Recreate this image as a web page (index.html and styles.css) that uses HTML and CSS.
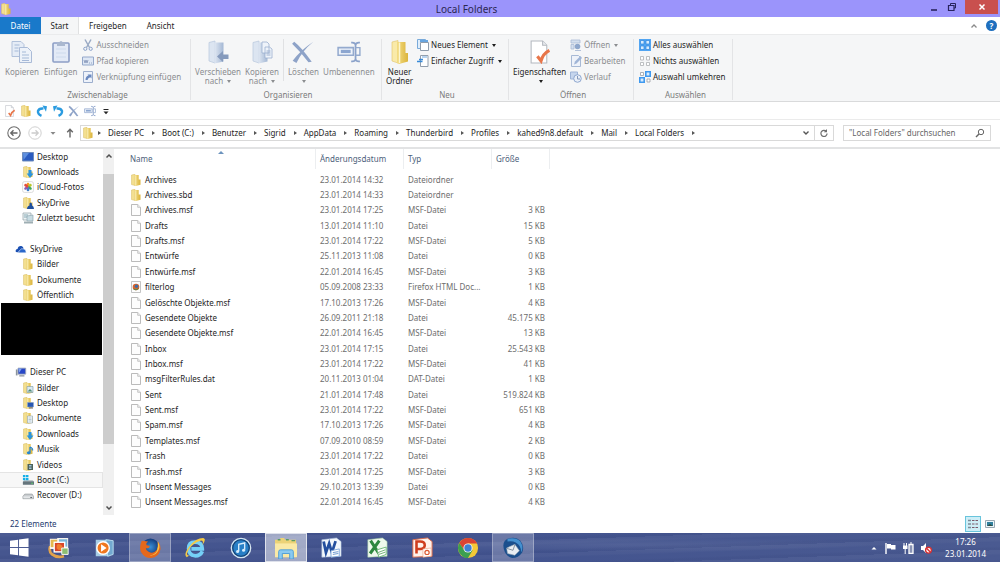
FILE: index.html
```html
<!DOCTYPE html>
<html lang="de">
<head>
<meta charset="utf-8">
<title>Local Folders</title>
<link rel="stylesheet" href="styles.css">
</head>
<body>
<svg class="sprite" aria-hidden="true">
  <defs>
    <linearGradient id="gy" x1="0" x2="1"><stop offset="0" stop-color="#f3dc83"/><stop offset="1" stop-color="#dbb43c"/></linearGradient>
    <linearGradient id="gb" x1="0" x2="1"><stop offset="0" stop-color="#dfe7f2"/><stop offset="1" stop-color="#a3b7d4"/></linearGradient>
    <radialGradient id="gff"><stop offset="0" stop-color="#3b8fd6"/><stop offset="1" stop-color="#123a7c"/></radialGradient>
  </defs>
  <symbol id="folder" viewBox="0 0 12 12"><path d="M1.500 1L5 .3v11.200l-3.500-.9z" fill="#f3df90" stroke="#d9bd62" stroke-width=".5"/><path d="M4.700 1h4v4.500h1.800v5.200L5.800 12l-1.100-.4z" fill="url(#gy)"/><path d="M5.800 1.500v10" stroke="#fbf2c4" stroke-width=".8"/></symbol>
  <symbol id="bigfolder" viewBox="0 0 22 24"><path d="M3 2L9 .5v22.500l-6-2z" fill="#f9eaa9" stroke="#dfc36a" stroke-width=".6"/><path d="M8 2h8.500v11H19v8.500L10 24l-2-1z" fill="url(#gy)"/><path d="M10.500 2.500V23" stroke="#fdf6cf" stroke-width="1.500"/></symbol>
  <symbol id="file" viewBox="0 0 10 12"><path d="M.5.5h6.200l2.800 2.800v8.200h-9z" fill="#fdfdfd" stroke="#a9a9a9" stroke-width=".8"/><path d="M6.700.5v2.800h2.800" fill="#eee" stroke="#b5b5b5" stroke-width=".7"/></symbol>
  <symbol id="html" viewBox="0 0 10 12"><path d="M.5.5h9v11h-9z" fill="#fdfdfd" stroke="#b5b5b5" stroke-width=".8"/><circle cx="5" cy="6" r="3.300" fill="#d8632b"/><circle cx="5.500" cy="5.300" r="1.700" fill="#3c6da8"/><path d="M2.500 8q2.500 2 5-.5" stroke="#4d8a4b" fill="none"/></symbol>
  <symbol id="check" viewBox="0 0 20 23"><path d="M1.500 1h11l4 4v17h-15z" fill="#fff" stroke="#b3b8bf"/><path d="M12.500 1v4h4" fill="#e8ebef" stroke="#b3b8bf"/><path d="M7.500 15.500l3.500 4.500q2-7 8-10" fill="none" stroke="#e8764a" stroke-width="3"/></symbol>
  <symbol id="x" viewBox="0 0 22 22"><path d="M3 1.500Q10 7 19 20L16 20.500Q9 11 1 3.500zM20.500 1.500Q10 10 5 21L1.500 19Q9 9 20.500 1.500z" fill="#8ea3c8"/></symbol>
  <symbol id="rename" viewBox="0 0 22 20"><path d="M1 6h14v7H1z" fill="#eef3fa" stroke="#94aace" stroke-width="1.400"/><path d="M3.500 8h9v3h-9z" fill="#8ca6d0"/><path d="M13 1.500q3.500-.5 4 2 .5-2.500 4-2M13 18.500q3.500.5 4-2 .5 2.500 4 2M17 3v14" fill="none" stroke="#8ba2ca" stroke-width="1.600"/><path d="M17 6h4v7h-4" fill="none" stroke="#94aace" stroke-width="1.300"/></symbol>
  <symbol id="redo" viewBox="0 0 12 12"><path d="M5.500 10.800Q1.500 9 2 6 3 3 7.500 3.500" fill="none" stroke="#2a9be0" stroke-width="2.400"/><path d="M6.500.5l4.500.8-1 5.500z" fill="#2a9be0"/></symbol>
  <symbol id="dl" viewBox="0 0 12 12"><use href="#folder"/><path d="M6.500 4h3v3.500h2L8 12 4.700 7.500h1.800z" fill="#2a94dd"/></symbol>
  <symbol id="fdesk" viewBox="0 0 12 12"><use href="#folder"/><path d="M5.500 5.500h6v4.500h-6z" fill="#2757b3" stroke="#89a4cf" stroke-width=".5"/><path d="M7 11h4" stroke="#667"/></symbol>
  <symbol id="fsky" viewBox="0 0 12 12"><use href="#folder"/><path d="M5 12q0-3 2.500-3.500Q7 6 8.500 5.500q2 .5 1.500 3 2 .5 2 3.500z" fill="#20519f"/></symbol>
  <symbol id="fpic" viewBox="0 0 12 12"><use href="#folder"/><path d="M5 4.500h6v6H5z" fill="#d9e9f2" stroke="#7d98a3" stroke-width=".6"/><path d="M5.500 9.500L8 7l2.500 2.500z" fill="#528d78"/></symbol>
  <symbol id="fdoc" viewBox="0 0 12 12"><use href="#folder"/><path d="M5.500 4h5v7h-5z" fill="#f4f8fb" stroke="#8aa0ad" stroke-width=".6"/><path d="M6.500 6h3M6.500 7.500h3M6.500 9h3" stroke="#86a7bd" stroke-width=".6"/></symbol>
  <symbol id="fmus" viewBox="0 0 12 12"><use href="#folder"/><path d="M8 4v5.500M8 4q3 1 2.500 3.500" fill="none" stroke="#2785cf" stroke-width="1.300"/><ellipse cx="6.800" cy="9.800" rx="1.900" ry="1.500" fill="#2785cf"/></symbol>
  <symbol id="fvid" viewBox="0 0 12 12"><use href="#folder"/><path d="M5.500 5h5.500v6H5.500z" fill="#4d6259"/><path d="M7 6h2.500v1.500H7zM7 8.500h2.500V10H7z" fill="#9bc0d8"/></symbol>
  <symbol id="desk" viewBox="0 0 12 12"><path d="M.5 1.500h11v8.500H.5z" fill="#2c5cc0" stroke="#6f8dbd"/><path d="M1 2h6L1.500 9z" fill="#5f90df"/></symbol>
  <symbol id="photos" viewBox="0 0 12 12"><rect x=".5" y=".5" width="11" height="11" rx="2" fill="#fbfbfb" stroke="#ccc" stroke-width=".6"/><g stroke-width="2.600" stroke-linecap="round"><path d="M6 4.800V3" stroke="#f59a23"/><path d="M7 5.200l1.500-1" stroke="#b9c92e"/><path d="M7 6.500l1.500 1" stroke="#42a95c"/><path d="M6 7.200V9" stroke="#3d7fc9"/><path d="M5 6.500l-1.500 1" stroke="#8c5bb4"/><path d="M5 5.200l-1.500-1" stroke="#e34b3d"/></g></symbol>
  <symbol id="recent" viewBox="0 0 12 12"><path d="M1 1h8v7H1z" fill="#edf3f5" stroke="#90a2a8" stroke-width=".7"/><path d="M2 3h4M2 5h3" stroke="#6d98a5" stroke-width=".8"/><path d="M5 4l6-1v6H5z" fill="#c8dce3" stroke="#88a0a9" stroke-width=".6"/><path d="M2 9.500h9v2H2z" fill="#9eaeb3"/></symbol>
  <symbol id="cloud" viewBox="0 0 14 12"><path d="M1 9.500Q0 6.500 3 6q.5-4 4.500-3.500Q10 3 10 6L5 10z" fill="#1a4fb2"/><path d="M4.500 10.500Q3.500 8 6 7.500 7 4.500 10 6q3 0 3 4.500z" fill="#2a67ca" stroke="#fff" stroke-width=".6"/></symbol>
  <symbol id="pc" viewBox="0 0 14 12"><path d="M1 3h2v7H1z" fill="#8b949d"/><path d="M3.500 1.500h9v7h-9z" fill="#2747c8" stroke="#9fa7b5"/><path d="M4 2h4L5 7z" fill="#7fa3ee"/><path d="M5 10.500h6" stroke="#8c939d" stroke-width="1.500"/></symbol>
  <symbol id="boot" viewBox="0 0 13 12"><path d="M1 7.500l1.500-1h9l1.500 1v3.500H1z" fill="#8d999f"/><path d="M1 8h12v3H1z" fill="#65757c"/><path d="M1 .5h2.700v2.600H1zM4.300.5H7v2.600H4.300zM1 3.700h2.700v2.600H1zM4.300 3.700H7v2.600H4.300z" fill="#15b0e8"/><path d="M10 9.500h2" stroke="#5cda6d"/></symbol>
  <symbol id="drive" viewBox="0 0 13 12"><path d="M1 7.500L3 5h8l1.500 2.500V10H1z" fill="#c9cdd0" stroke="#8f9599" stroke-width=".7"/><path d="M1.500 7.500h10.500v2H1.500z" fill="#e4e6e8"/><path d="M9 8.700h2" stroke="#596067"/></symbol>
  <symbol id="copy" viewBox="0 0 22 24"><path d="M1 1.500h9l3 3v12H1z" fill="#e5ecf6" stroke="#b1c1da"/><path d="M8.500 7.500h8l4 4v11h-12z" fill="#edf2f9" stroke="#aabbd7"/><path d="M3.500 5h5M3.500 8h4M3.500 11h4M11 12h4M11 15h7M11 18h7M11 20.500h7" stroke="#a6b9d8" stroke-width="1.200"/></symbol>
  <symbol id="paste" viewBox="0 0 20 24"><rect x="2" y="3" width="16" height="19" rx="1" fill="#e3eaf6" stroke="#8d9fc6" stroke-width="1.600"/><path d="M6 2.500h2q2-3 4 0h2V6H6z" fill="#aab8cf"/><path d="M5 9h10M5 13h10M5 17h10" stroke="#d5dff0" stroke-width="1.500"/></symbol>
  <symbol id="bfolder" viewBox="0 0 22 24"><path d="M2 2.500L8 1v22l-6-2z" fill="#dce5f1" stroke="#b8c7dc" stroke-width=".7"/><path d="M7.500 2.500h9v19l-9 2z" fill="url(#gb)"/></symbol>
  <symbol id="move" viewBox="0 0 22 24"><use href="#bfolder"/><path d="M10 16.500l6-5.500v3.500h5.500v4.500H16v3z" fill="#859abc"/></symbol>
  <symbol id="copyto" viewBox="0 0 22 24"><use href="#bfolder"/><path d="M11 2h5l2 2v9h-7zM14 7h4.500l2.500 2v9h-7z" fill="#eef3fa" stroke="#9db0cf" stroke-width=".8"/><path d="M15.500 11h4M15.500 13h4M15.500 15h4" stroke="#9db0cf"/></symbol>
  <symbol id="cut" viewBox="0 0 12 12"><path d="M3 .5l4.500 8M9 .5l-4.500 8" stroke="#9aaac4" stroke-width="1.500"/><circle cx="3.300" cy="9.800" r="1.600" fill="none" stroke="#8ba2c9"/><circle cx="8.700" cy="9.800" r="1.600" fill="none" stroke="#8ba2c9"/></symbol>
  <symbol id="path" viewBox="0 0 12 12"><path d="M.5 2h11v8H.5z" fill="#dee7f4" stroke="#94a8ca"/><path d="M2 5l1 3 1-3 1 3 1-3M7 8h1M9 8h1" fill="none" stroke="#8092b5" stroke-width=".8"/></symbol>
  <symbol id="link" viewBox="0 0 12 12"><path d="M1.500.5h9v11h-9z" fill="#edf2fa" stroke="#9caecd"/><path d="M3.500 9q0-4 3-4.500L5.500 3.500h4v4l-1.200-1.200Q6 7 5.500 9z" fill="#6b8ac0"/></symbol>
  <symbol id="newitem" viewBox="0 0 12 12"><path d="M.5.5h8v9h-8z" fill="#e0eefb" stroke="#79aada"/><path d="M3.500 3.500h8v8h-8z" fill="#fff" stroke="#8f9cab"/><path d="M3 1h8v2H3z" fill="#68a5df"/></symbol>
  <symbol id="easy" viewBox="0 0 12 12"><path d="M3.500.5H11v11H3.500z" fill="#fff" stroke="#929eac"/><path d="M0 6.500h5.500M2 4.500h4" stroke="#398ad8" stroke-width="1.300"/><path d="M5 2h5" stroke="#70a8df"/></symbol>
  <symbol id="open" viewBox="0 0 12 12"><path d="M1 1h9v3H1zM1 5.500h3V10H1z" fill="#d5e0ef" stroke="#a9bbd6" stroke-width=".8"/><circle cx="7.500" cy="7.500" r="2.800" fill="#8fa7cc"/><path d="M5 11.500h6" stroke="#b2c1d9"/></symbol>
  <symbol id="edit" viewBox="0 0 12 12"><path d="M1.500.5h7l2 2v9h-9z" fill="#eef2f9" stroke="#a7b9d5"/><path d="M4 9.500l1-3L10.500 1 12 3 6.500 8.500z" fill="#9fb4d6"/></symbol>
  <symbol id="hist" viewBox="0 0 12 12"><path d="M.5 1h7v7h-7z" fill="#c5d5ed" stroke="#9eb4d7"/><circle cx="7.500" cy="7.500" r="3.800" fill="#e9eff8" stroke="#8ea7cf"/><path d="M7.500 5v3h2.500" fill="none" stroke="#8499bd"/></symbol>
  <symbol id="all" viewBox="0 0 12 12"><path d="M0 0h12v12H0z" fill="#52a5f2"/><path d="M1.500 1.500h3.500V5H1.500zM7 1.500h3.500V5H7zM1.500 7H5v3.500H1.500zM7 7h3.500v3.500H7z" fill="#d7ebfd" stroke="#2e86de" stroke-width=".7"/></symbol>
  <symbol id="none" viewBox="0 0 12 12"><path d="M1.500 1.500h3V5h-3zM7.500 1.500h3V5h-3zM1.500 7.500h3v3h-3zM7.500 7.500h3v3h-3z" fill="#fff" stroke="#adb0b4" stroke-width=".8"/></symbol>
  <symbol id="inv" viewBox="0 0 12 12"><path d="M1.500 1.500h3v3h-3zM8 8h3v3H8z" fill="#fff" stroke="#999fa6" stroke-width=".8"/><path d="M6.800.800h4.400v4.400H6.800zM.8 6.800h4.400v4.400H.8z" fill="#d9ecfe" stroke="#3f99ef" stroke-width="1.600"/></symbol>
</svg>

<div class="window">
  <header class="titlebar">
    <svg class="i12"><use href="#folder"/></svg>
    <h1>Local Folders</h1>
    <div class="wincontrols">
      <button aria-label="Minimieren"><svg viewBox="0 0 10 10" class="i10"><path d="M2 8h6" stroke="#28235e" stroke-width="1.600"/></svg></button>
      <button aria-label="Wiederherstellen"><svg viewBox="0 0 10 10" class="i10"><path d="M3.500 3V1.500h5V6H7" fill="none" stroke="#28235e"/><path d="M1.500 3.500H7v5H1.500z" fill="none" stroke="#28235e" stroke-width="1.200"/></svg></button>
      <button class="close" aria-label="Schließen"><svg viewBox="0 0 10 10" class="i10"><path d="M2.500 2.500l5 5M7.500 2.500l-5 5" stroke="#fff" stroke-width="1.500"/></svg></button>
    </div>
  </header>

  <nav class="tabs">
    <button class="tab file-tab">Datei</button>
    <button class="tab active">Start</button>
    <button class="tab">Freigeben</button>
    <button class="tab">Ansicht</button>
    <span class="tabs-right">
      <button aria-label="Menüband minimieren"><svg viewBox="0 0 8 8" class="i8"><path d="M1.500 5.500L4 3l2.500 2.500" fill="none" stroke="#8a8a8a" stroke-width="1.300"/></svg></button>
      <button class="help" aria-label="Hilfe">?</button>
    </span>
  </nav>

  <section class="ribbon">
    <div class="group g1 off">
      <div class="tools">
        <button class="big"><svg><use href="#copy"/></svg>Kopieren</button>
        <button class="big"><svg><use href="#paste"/></svg>Einfügen</button>
        <div class="stack">
          <button><svg class="i12"><use href="#cut"/></svg>Ausschneiden</button>
          <button><svg class="i12"><use href="#path"/></svg>Pfad kopieren</button>
          <button><svg class="i12"><use href="#link"/></svg>Verknüpfung einfügen</button>
        </div>
      </div>
      <h2>Zwischenablage</h2>
    </div>
    <div class="group g2 off">
      <div class="tools">
        <button class="big"><svg><use href="#move"/></svg>Verschieben<span>nach <i class="caret"></i></span></button>
        <button class="big"><svg><use href="#copyto"/></svg>Kopieren<span>nach <i class="caret"></i></span></button>
        <span class="divider"></span>
        <button class="big"><svg><use href="#x"/></svg>Löschen<span><i class="caret"></i></span></button>
        <button class="big"><svg><use href="#rename"/></svg>Umbenennen</button>
      </div>
      <h2>Organisieren</h2>
    </div>
    <div class="group g3">
      <div class="tools">
        <button class="big"><svg><use href="#bigfolder"/></svg>Neuer<span>Ordner</span></button>
        <div class="stack">
          <button><svg class="i12"><use href="#newitem"/></svg>Neues Element <i class="caret"></i></button>
          <button><svg class="i12"><use href="#easy"/></svg>Einfacher Zugriff <i class="caret"></i></button>
        </div>
      </div>
      <h2>Neu</h2>
    </div>
    <div class="group g4">
      <div class="tools">
        <button class="big"><svg><use href="#check"/></svg>Eigenschaften<span><i class="caret"></i></span></button>
        <div class="stack off">
          <button><svg class="i12"><use href="#open"/></svg>Öffnen <i class="caret"></i></button>
          <button><svg class="i12"><use href="#edit"/></svg>Bearbeiten</button>
          <button><svg class="i12"><use href="#hist"/></svg>Verlauf</button>
        </div>
      </div>
      <h2>Öffnen</h2>
    </div>
    <div class="group g5">
      <div class="tools">
        <div class="stack">
          <button><svg class="i12"><use href="#all"/></svg>Alles auswählen</button>
          <button><svg class="i12"><use href="#none"/></svg>Nichts auswählen</button>
          <button><svg class="i12"><use href="#inv"/></svg>Auswahl umkehren</button>
        </div>
      </div>
      <h2>Auswählen</h2>
    </div>
  </section>

  <div class="quick">
    <button aria-label="Eigenschaften"><svg class="i12"><use href="#check"/></svg></button>
    <button aria-label="Neuer Ordner"><svg class="i12"><use href="#folder"/></svg></button>
    <button aria-label="Rückgängig"><svg class="i12"><use href="#redo"/></svg></button>
    <button class="flip" aria-label="Wiederholen"><svg class="i12"><use href="#redo"/></svg></button>
    <button aria-label="Löschen"><svg class="i12"><use href="#x"/></svg></button>
    <button aria-label="Umbenennen"><svg class="i12"><use href="#rename"/></svg></button>
    <button aria-label="Anpassen"><svg class="i12" viewBox="0 0 12 12"><path d="M3.500 4.500h5" stroke="#222"/><path d="M3.500 6.500h5L6 9.200z" fill="#222"/></svg></button>
  </div>

  <div class="address">
    <button aria-label="Zurück"><svg class="i14" viewBox="0 0 14 14"><circle cx="7" cy="7" r="6.200" fill="none" stroke="#6f6f6f" stroke-width="1.100"/><path d="M10.500 7H4M6.500 4.300L3.800 7l2.700 2.700" fill="none" stroke="#666" stroke-width="1.400"/></svg></button>
    <button aria-label="Vorwärts"><svg class="i14" viewBox="0 0 14 14"><circle cx="7" cy="7" r="6.200" fill="none" stroke="#d0d0d0"/><path d="M3.500 7H10M7.500 4.300L10.200 7 7.500 9.700" fill="none" stroke="#ccc" stroke-width="1.300"/></svg></button>
    <button aria-label="Verlauf"><svg class="i8" viewBox="0 0 8 8"><path d="M1.500 3h5L4 5.700z" fill="#888"/></svg></button>
    <button aria-label="Nach oben"><svg class="i12" viewBox="0 0 12 12"><path d="M6 10.500V2.500M3.200 5.300L6 2.300l2.800 3" fill="none" stroke="#666" stroke-width="1.400"/></svg></button>
    <div class="crumbs">
      <svg class="i12"><use href="#folder"/></svg>
      <button>Dieser PC</button><button>Boot (C:)</button><button>Benutzer</button><button>Sigrid</button><button>AppData</button><button>Roaming</button><button>Thunderbird</button><button>Profiles</button><button>kahed9n8.default</button><button>Mail</button><button class="last">Local Folders</button>
      <span class="crumb-end">
        <button aria-label="Vorherige Orte"><svg class="i8" viewBox="0 0 8 8"><path d="M1.500 2.500L4 5l2.500-2.500" fill="none" stroke="#555" stroke-width="1.400"/></svg></button>
        <button class="refresh" aria-label="Aktualisieren"><svg class="i10" viewBox="0 0 10 10"><path d="M7.200 3.200A3.100 3.100 0 1 0 8.100 5.500" fill="none" stroke="#6e6e6e" stroke-width="1.200"/><path d="M8 1v3.200H4.800z" fill="#6e6e6e"/></svg></button>
      </span>
    </div>
    <label class="search"><input type="text" placeholder="&quot;Local Folders&quot; durchsuchen" aria-label="Local Folders durchsuchen"><svg class="i10" viewBox="0 0 10 10"><circle cx="6" cy="4" r="2.700" fill="none" stroke="#666"/><path d="M4 6L1 9" stroke="#666" stroke-width="1.400"/></svg></label>
  </div>

  <main class="body">
    <nav class="tree" aria-label="Navigation">
      <ul>
        <li><a href="#"><svg class="i12"><use href="#desk"/></svg>Desktop</a></li>
        <li><a href="#"><svg class="i12"><use href="#dl"/></svg>Downloads</a></li>
        <li><a href="#"><svg class="i12"><use href="#photos"/></svg>iCloud-Fotos</a></li>
        <li><a href="#"><svg class="i12"><use href="#fsky"/></svg>SkyDrive</a></li>
        <li><a href="#"><svg class="i12"><use href="#recent"/></svg>Zuletzt besucht</a></li>
        <li aria-hidden="true"></li>
        <li class="root"><a href="#"><svg class="i12"><use href="#cloud"/></svg>SkyDrive</a></li>
        <li><a href="#"><svg class="i12"><use href="#folder"/></svg>Bilder</a></li>
        <li><a href="#"><svg class="i12"><use href="#folder"/></svg>Dokumente</a></li>
        <li><a href="#"><svg class="i12"><use href="#folder"/></svg>Öffentlich</a></li>
        <li class="redacted" aria-hidden="true"></li>
        <li class="root"><a href="#"><svg class="i12"><use href="#pc"/></svg>Dieser PC</a></li>
        <li><a href="#"><svg class="i12"><use href="#fpic"/></svg>Bilder</a></li>
        <li><a href="#"><svg class="i12"><use href="#fdesk"/></svg>Desktop</a></li>
        <li><a href="#"><svg class="i12"><use href="#fdoc"/></svg>Dokumente</a></li>
        <li><a href="#"><svg class="i12"><use href="#dl"/></svg>Downloads</a></li>
        <li><a href="#"><svg class="i12"><use href="#fmus"/></svg>Musik</a></li>
        <li><a href="#"><svg class="i12"><use href="#fvid"/></svg>Videos</a></li>
        <li class="selected"><a href="#"><svg class="i12"><use href="#boot"/></svg>Boot (C:)</a></li>
        <li><a href="#"><svg class="i12"><use href="#drive"/></svg>Recover (D:)</a></li>
      </ul>
    </nav>
    <div class="scroll" aria-hidden="true">
      <svg class="i8" viewBox="0 0 8 8"><path d="M1.500 5.500L4 3l2.500 2.500" fill="none" stroke="#505050" stroke-width="1.500"/></svg>
      <span class="track"><span class="thumb"></span></span>
      <svg class="i8" viewBox="0 0 8 8"><path d="M1.500 2.500L4 5l2.500-2.500" fill="none" stroke="#505050" stroke-width="1.500"/></svg>
    </div>
    <table class="files">
      <thead><tr><th class="sorted">Name<svg class="sort" viewBox="0 0 6 4"><path d="M0 4l3-3 3 3z" fill="#6d94be"/></svg></th><th>Änderungsdatum</th><th>Typ</th><th>Größe</th></tr></thead>
      <tbody>
        <tr><td><svg class="i12"><use href="#folder"/></svg>Archives</td><td>23.01.2014 14:32</td><td>Dateiordner</td><td></td></tr>
        <tr><td><svg class="i12"><use href="#folder"/></svg>Archives.sbd</td><td>23.01.2014 14:33</td><td>Dateiordner</td><td></td></tr>
        <tr><td><svg class="i12"><use href="#file"/></svg>Archives.msf</td><td>23.01.2014 17:25</td><td>MSF-Datei</td><td>3 KB</td></tr>
        <tr><td><svg class="i12"><use href="#file"/></svg>Drafts</td><td>13.01.2014 11:10</td><td>Datei</td><td>15 KB</td></tr>
        <tr><td><svg class="i12"><use href="#file"/></svg>Drafts.msf</td><td>23.01.2014 17:22</td><td>MSF-Datei</td><td>5 KB</td></tr>
        <tr><td><svg class="i12"><use href="#file"/></svg>Entwürfe</td><td>25.11.2013 11:08</td><td>Datei</td><td>0 KB</td></tr>
        <tr><td><svg class="i12"><use href="#file"/></svg>Entwürfe.msf</td><td>22.01.2014 16:45</td><td>MSF-Datei</td><td>3 KB</td></tr>
        <tr><td><svg class="i12"><use href="#html"/></svg>filterlog</td><td>05.09.2008 23:33</td><td>Firefox HTML Doc...</td><td>1 KB</td></tr>
        <tr><td><svg class="i12"><use href="#file"/></svg>Gelöschte Objekte.msf</td><td>17.10.2013 17:26</td><td>MSF-Datei</td><td>4 KB</td></tr>
        <tr><td><svg class="i12"><use href="#file"/></svg>Gesendete Objekte</td><td>26.09.2011 21:18</td><td>Datei</td><td>45.175 KB</td></tr>
        <tr><td><svg class="i12"><use href="#file"/></svg>Gesendete Objekte.msf</td><td>22.01.2014 16:45</td><td>MSF-Datei</td><td>13 KB</td></tr>
        <tr><td><svg class="i12"><use href="#file"/></svg>Inbox</td><td>23.01.2014 17:15</td><td>Datei</td><td>25.543 KB</td></tr>
        <tr><td><svg class="i12"><use href="#file"/></svg>Inbox.msf</td><td>23.01.2014 17:22</td><td>MSF-Datei</td><td>41 KB</td></tr>
        <tr><td><svg class="i12"><use href="#file"/></svg>msgFilterRules.dat</td><td>20.11.2013 01:04</td><td>DAT-Datei</td><td>1 KB</td></tr>
        <tr><td><svg class="i12"><use href="#file"/></svg>Sent</td><td>21.01.2014 17:48</td><td>Datei</td><td>519.824 KB</td></tr>
        <tr><td><svg class="i12"><use href="#file"/></svg>Sent.msf</td><td>23.01.2014 17:22</td><td>MSF-Datei</td><td>651 KB</td></tr>
        <tr><td><svg class="i12"><use href="#file"/></svg>Spam.msf</td><td>17.10.2013 17:26</td><td>MSF-Datei</td><td>4 KB</td></tr>
        <tr><td><svg class="i12"><use href="#file"/></svg>Templates.msf</td><td>07.09.2010 08:59</td><td>MSF-Datei</td><td>2 KB</td></tr>
        <tr><td><svg class="i12"><use href="#file"/></svg>Trash</td><td>23.01.2014 17:22</td><td>Datei</td><td>0 KB</td></tr>
        <tr><td><svg class="i12"><use href="#file"/></svg>Trash.msf</td><td>23.01.2014 17:25</td><td>MSF-Datei</td><td>3 KB</td></tr>
        <tr><td><svg class="i12"><use href="#file"/></svg>Unsent Messages</td><td>29.10.2013 13:39</td><td>Datei</td><td>0 KB</td></tr>
        <tr><td><svg class="i12"><use href="#file"/></svg>Unsent Messages.msf</td><td>22.01.2014 16:45</td><td>MSF-Datei</td><td>4 KB</td></tr>
      </tbody>
    </table>
  </main>

  <footer class="status">
    <span>22 Elemente</span>
    <span class="views">
      <button class="on" aria-label="Details"><svg class="i12" viewBox="0 0 12 12"><path d="M1 2.500h3M1 6h3M1 9.500h3" stroke="#7d8c98" stroke-width="1.500"/><path d="M5 2.500h2.500M8.500 2.500H11M5 6h2.500M8.500 6H11M5 9.500h2.500M8.500 9.500H11" stroke="#7a5a6a"/></svg></button>
      <button aria-label="Große Symbole"><svg class="i10" viewBox="0 0 10 10"><path d="M.5 1.500h9v7h-9z" fill="#eaf5fa" stroke="#9aa8b2"/><path d="M2 3h6v4H2z" fill="#2f7f9d"/><path d="M2 7l3-2 3 2z" fill="#2e4b3e"/></svg></button>
    </span>
  </footer>

  <footer class="taskbar">
    <button class="start" aria-label="Start"><svg viewBox="0 0 20 20"><path d="M0 3l8.500-1.200v7.700H0zM9.500 1.600L19.500.2v9.300h-10zM0 10.500h8.500v7.700L0 17zM9.500 10.500h10v9.300l-10-1.400z" fill="#fff"/></svg></button>
    <div class="apps">
      <button aria-label="Fotos"><svg viewBox="0 0 24 24"><path d="M2.500 10q-2 6 2 9 5 4 13 2" fill="none" stroke="#e3a24b" stroke-width="3"/><path d="M2 2h10v11H2zM10 1h12v11H10z" fill="#f7f3ee"/><path d="M3 3h7v8H3z" fill="#e5b94e"/><path d="M12 2.500h9v8h-9z" fill="#79b5d8"/><path d="M6 5h13v12H6z" fill="#fff"/><path d="M7.500 6.500h10v9h-10z" fill="#d8472b"/><path d="M9.500 8.500q3-2 6 1v4q-3 2-6-1z" fill="#f07e30"/><path d="M15 12h7v7h-7z" fill="#8dbe72" stroke="#fff"/></svg></button>
      <button aria-label="Media Player"><svg viewBox="0 0 24 24"><path d="M3 3h15v18H3z" fill="#a7cde5"/><path d="M14 3l8 1v15l-6 2z" fill="#72a9d0" stroke="#bcdff1"/><circle cx="11" cy="12" r="6.800" fill="#f07820" stroke="#fff" stroke-width="1.500"/><path d="M8.800 8l6 4-6 4z" fill="#fff"/></svg></button>
      <button class="open" aria-label="Firefox"><svg viewBox="0 0 24 24"><circle cx="12.500" cy="11" r="9.500" fill="url(#gff)"/><path d="M3 4Q0 11 2 16q4 7 11 7 9-1 10.500-10 0-5-3-8 1 5-1 9-4 5-9 2-3-1-3-4 3 1 4-1 1-2-3-2Q7 7 10 5 5 4 3 4z" fill="#e4681c"/><path d="M20.500 5q3 5 1 9-3 7-10 6 8 0 9-9z" fill="#f7c146"/></svg></button>
      <button aria-label="Internet Explorer"><svg viewBox="0 0 24 24"><path d="M20 15.500q-2 5-8 5-7-1-7-8t7-7q8 0 8 7.500H8" fill="none" stroke="#75d0f7" stroke-width="4"/><path d="M3 22Q-1 19 6 10T21 1q4 1-1 8Q22 3 18 4 10 6 5 14 1 21 6 20z" fill="#f4ca45"/></svg></button>
      <button aria-label="iTunes"><svg viewBox="0 0 24 24"><circle cx="12" cy="12" r="10.500" fill="#287fc6" stroke="#d5e4ef" stroke-width="1.600"/><circle cx="12" cy="12" r="9" fill="none" stroke="#143e70" stroke-width="1.300"/><path d="M9.500 15.500V8l6.500-1.500V14" fill="none" stroke="#d7ecfb" stroke-width="1.500"/><circle cx="8.300" cy="15.800" r="1.700" fill="#d7ecfb"/><circle cx="14.800" cy="14.500" r="1.700" fill="#d7ecfb"/></svg></button>
      <button class="open current" aria-label="Explorer"><svg viewBox="0 0 24 24"><path d="M0 3h5l1-2h4l1 2h12v19H0z" fill="#ecd277"/><path d="M0 7h24v15H0z" fill="#fae9a6"/><path d="M3 3h3M12 3h3M18 4h4" stroke="#5c9c63" stroke-width="1.500"/><path d="M4 24v-8q0-2 2-2h12q2 0 2 2v8h-4v-6H8v6z" fill="#8acaf0" stroke="#4b9bd6"/></svg></button>
      <button aria-label="Word"><svg viewBox="0 0 24 24"><path d="M2 3l16-2 5 4v16l-21 1z" fill="#f3f7fc" stroke="#a8bddc" stroke-width=".6"/><path d="M4 5l2.500 12L10 7l3 10 4-12.500" fill="none" stroke="#244f9f" stroke-width="3"/><path d="M12 15l9-2v8l-9 1z" fill="#fff" stroke="#80a7db"/><path d="M14 17l6-1M14 19l6-1" stroke="#6390cc"/></svg></button>
      <button aria-label="Excel"><svg viewBox="0 0 24 24"><path d="M2 3l16-2 5 4v16l-21 1z" fill="#eef8ec" stroke="#9fcca2" stroke-width=".6"/><path d="M5 4l9 14M14.500 4L4.500 18" stroke="#2d873e" stroke-width="3.300"/><path d="M12 14l10-3v8l-8 3z" fill="#fff" stroke="#69b574"/><path d="M13 17l8-3M14 19l7-2.500" stroke="#68ad6b"/></svg></button>
      <button aria-label="PowerPoint"><svg viewBox="0 0 24 24"><path d="M2 3l16-2 5 4v16l-21 1z" fill="#fff2ec" stroke="#dc6a48"/><path d="M6 18V5h4q5 0 5 4t-5 4H7" fill="none" stroke="#cf3d1d" stroke-width="2.800"/><path d="M13 13l9-1v9l-9 1z" fill="#fff" stroke="#e9a085" stroke-width=".7"/><circle cx="17.500" cy="16.800" r="2.300" fill="none" stroke="#dd5830" stroke-width="1.300"/></svg></button>
      <button aria-label="Chrome"><svg viewBox="0 0 24 24"><circle cx="12" cy="12" r="11" fill="#f4ca37"/><path d="M2.500 6.500Q6 1 12 1q7 0 10 6H12L7.500 14z" fill="#d94434"/><path d="M2.500 6.500Q-1 14 4 19q3 4 8 4l5-8.500L7.500 14z" fill="#3c9f50"/><circle cx="12" cy="12" r="5" fill="#f4f6f6"/><circle cx="12" cy="12" r="4" fill="#3d81d4"/></svg></button>
      <button class="open" aria-label="Thunderbird"><svg viewBox="0 0 24 24"><path d="M2 13Q0 5 6 2q9-3 14 2 5 6 2 13-4 6-11 6-7-2-9-10z" fill="#1b4f8d"/><path d="M6 2q9-2 14 3 4 6 1 12 0-8-6-11-4-2-9-1z" fill="#4490cf"/><path d="M5 12l9-4 5 7-5 5-8-2z" fill="#e9eef3" stroke="#8a9aab" stroke-width=".6"/><path d="M5.500 12.500l6.500 2 2-6" fill="none" stroke="#7e8b99"/></svg></button>
    </div>
    <div class="tray">
      <svg class="i8" viewBox="0 0 8 8"><path d="M1.500 5.500h5L4 3z" fill="#fff"/></svg>
      <svg class="i12" viewBox="0 0 12 12"><path d="M2 1v11" stroke="#fff" stroke-width="1.400"/><path d="M3 2h4v1h4.500v4.500H7v-1H3z" fill="#fff"/></svg>
      <svg class="i12" viewBox="0 0 12 12"><path d="M2 1v3M4.500 1v3M3.200 6v6" stroke="#fff"/><path d="M1 3.500h4.500V7H1z" fill="#fff"/><path d="M7 2.500h4v9H7z" fill="#8993b5" stroke="#fff" stroke-width="1.300"/><path d="M8 1h2" stroke="#fff"/></svg>
      <svg class="i12" viewBox="0 0 12 12"><path d="M1 4h2l3-3v10L3 8H1z" fill="#fff"/><circle cx="8.500" cy="8.200" r="2.900" fill="#fff" stroke="#d92f30" stroke-width="1.400"/><path d="M6.500 6.200l4 4" stroke="#d92f30" stroke-width="1.400"/></svg>
      <time class="clock"><span>17:26</span><span>23.01.2014</span></time>
    </div>
  </footer>
</div>
</body>
</html>
```
FILE: styles.css
```css
* { box-sizing: border-box; }
body {
  margin: 0;
  font: 8px/12px "Noto Sans", "Open Sans", sans-serif;
  color: #1e1e1e;
  background: #fff;
}
button {
  display: flex;
  align-items: center;
  padding: 0;
  border: 0;
  background: none;
  color: inherit;
  font: inherit;
  white-space: nowrap;
}
h1, h2, ul { margin: 0; padding: 0; font: inherit; list-style: none; }
a { color: inherit; text-decoration: none; }
svg { flex: none; }
.sprite { position: absolute; width: 0; height: 0; }
.i8 { width: 8px; height: 8px; }
.i10 { width: 10px; height: 10px; }
.i12 { width: 12px; height: 12px; }
.i14 { width: 14px; height: 14px; }
.caret {
  display: inline-block;
  margin-left: 2px;
  border: 2px solid transparent;
  border-top: 3px solid currentColor;
  border-bottom: 0;
  vertical-align: middle;
}

.window { display: flex; flex-direction: column; min-height: 100vh; }

.titlebar { display: flex; align-items: center; height: 17px; background: #9b94fb; }
.titlebar h1 { flex: 1; text-align: center; font-size: 10px; color: #2b2752; }
.wincontrols { display: flex; align-self: flex-start; gap: 8px; margin-left: 8px; padding-right: 2px; }
.wincontrols .close { justify-content: center; width: 33px; height: 14px; background: #c9504e; }

.tabs { display: flex; height: 17px; }
.tab { justify-content: center; padding: 0 10px; }
.file-tab { width: 41px; background: #1979ca; color: #fff; }
.tab.active { width: 38px; background: #f5f6f7; border-right: 1px solid #e0e1e2; }
.tabs-right { display: flex; align-items: center; gap: 8px; margin-left: auto; padding-right: 3px; }
.help { justify-content: center; width: 11px; height: 11px; border-radius: 50%; background: #1e6fbe; color: #fff; font-weight: bold; }

.ribbon { display: flex; height: 68px; padding: 4px 0 0; background: #f5f6f7; border-top: 1px solid #eaebec; border-bottom: 1px solid #d9dadb; }
.group { display: flex; flex-direction: column; justify-content: space-between; border-right: 1px solid #e3e4e6; margin-bottom: 1px; }
.group h2 { text-align: center; color: #7b7b7b; line-height: 11px; }
.tools { display: flex; gap: 4px; }
.off { color: #8b8d90; }
.big { flex-direction: column; justify-content: flex-start; line-height: 9px; padding-top: 1px; }
.big svg { width: 24px; height: 24px; margin-bottom: 3px; }
.stack { display: flex; flex-direction: column; gap: 4px; }
.stack button { gap: 2px; }
.g1 { width: 191px; padding-left: 5px; }
.g1 .tools { gap: 5px; }
.g2 { width: 191px; padding-left: 4px; }
.g3 { width: 127px; padding-left: 4px; }
.g4 { width: 125px; padding-left: 4px; }
.g5 { width: 99px; padding-left: 5px; }
.divider { width: 1px; height: 42px; background: #e0e1e3; }

.quick { display: flex; align-items: center; gap: 4px; height: 18px; padding-left: 4px; border-bottom: 1px solid #ebebeb; }
.flip { transform: scaleX(-1); }

.address { display: flex; align-items: center; gap: 7px; height: 29px; padding: 0 9px 2px 7px; border-bottom: 2px solid #e2e3e4; }
.crumbs { display: flex; align-items: center; flex: 1; height: 16px; padding-left: 1px; margin-left: -3px; border: 1px solid #d9d9d9; }
.crumbs > svg { margin-right: -4px; }
.crumbs > button::before,
.crumbs .last::after { content: ""; margin: 0 7px 0 8px; border: 2px solid transparent; border-left: 3px solid #555; border-right: 0; }
.crumb-end { display: flex; align-self: stretch; margin-left: auto; }
.crumb-end button { padding: 0 4px; }
.refresh { border-left: 1px solid #d9d9d9; }
.search { display: flex; align-items: center; width: 148px; height: 16px; margin-left: 2px; padding: 0 5px; border: 1px solid #d9d9d9; }
.search input { flex: 1; min-width: 0; padding: 0; border: 0; outline: 0; font: inherit; color: #555; }
.search input::placeholder { color: #666; opacity: 1; }

.body { display: flex; flex: 1; }
.tree { width: 103px; display: flex; padding-bottom: 12px; }
.tree ul { display: grid; flex: 1; grid-template-rows: repeat(23, minmax(12px, 1fr)); }
.tree li { display: flex; padding-left: 22px; }
.tree li.root { padding-left: 15px; }
.tree a { display: flex; align-items: center; gap: 3px; white-space: nowrap; }
.tree .selected { background: #f7f7f7; border: 1px solid #e4e4e4; border-left: 0; }
.tree .redacted { grid-row: span 4; margin: 0 1px 9px; background: #000; }
.scroll { display: flex; flex-direction: column; align-items: center; justify-content: space-between; width: 11px; padding: 3px 0; background: #f0f0f0; }
.track { display: flex; flex: 1; align-self: stretch; padding: 14px 0 60px; }
.thumb { flex: 1; background: #cdcdcd; }

.files { display: flex; flex-direction: column; flex: 1; gap: 3px; padding: 0 16px 5px; }
.files tbody { display: grid; flex: 1; grid-template-rows: repeat(22, minmax(12px, 1fr)); }
.files tr { display: grid; grid-template-columns: 186px 88px 88px 58px; }
.files th { position: relative; height: 20px; padding: 0 4px; border-right: 1px solid #eceef0; text-align: left; font-weight: normal; line-height: 20px; color: #4c607a; }
.files .sorted { padding-left: 0; }
.sort { position: absolute; top: 1px; left: 50%; width: 6px; height: 4px; margin-left: -5px; }
.files td { display: flex; align-items: center; padding: 0 5px 0 4px; color: #6d6d6d; white-space: nowrap; }
.files td:first-child { gap: 3px; padding: 0; color: #1e1e1e; }
.files td:last-child { justify-content: flex-end; }

.status { display: flex; align-items: center; justify-content: space-between; height: 18px; padding: 0 5px 0 10px; color: #1e3a6e; }
.views { display: flex; align-items: center; gap: 4px; }
.views .on { padding: 1px; border: 1px solid #69c4dc; background: #cdeef7; height: 16px; width: 16px; }

.taskbar {
  display: flex;
  height: 29px;
  color: #fff;
  background:
    radial-gradient(ellipse at 62% 40%, rgba(255, 255, 255, .07), transparent 30%),
    repeating-linear-gradient(178deg, rgba(255, 255, 255, .03) 0 3px, transparent 5px 9px, rgba(10, 20, 70, .05) 11px 13px),
    linear-gradient(90deg, #46568f, #43548f 50%, #4a5a91);
}
.start { width: 38px; justify-content: center; }
.start svg { width: 19px; height: 19px; }
.apps { display: flex; justify-content: space-between; width: 496px; }
.apps button { justify-content: center; width: 42px; border: 1px solid transparent; }
.apps svg { width: 22px; height: 22px; }
.apps .open { background: rgba(255, 255, 255, .22); border-color: rgba(255, 255, 255, .3); }
.apps .current { background: rgba(255, 255, 255, .5); border-color: rgba(255, 255, 255, .65); }
.tray { display: flex; align-items: center; gap: 6px; margin-left: auto; padding-right: 14px; }
.clock { display: flex; flex-direction: column; align-items: center; margin-left: 7px; }
```
